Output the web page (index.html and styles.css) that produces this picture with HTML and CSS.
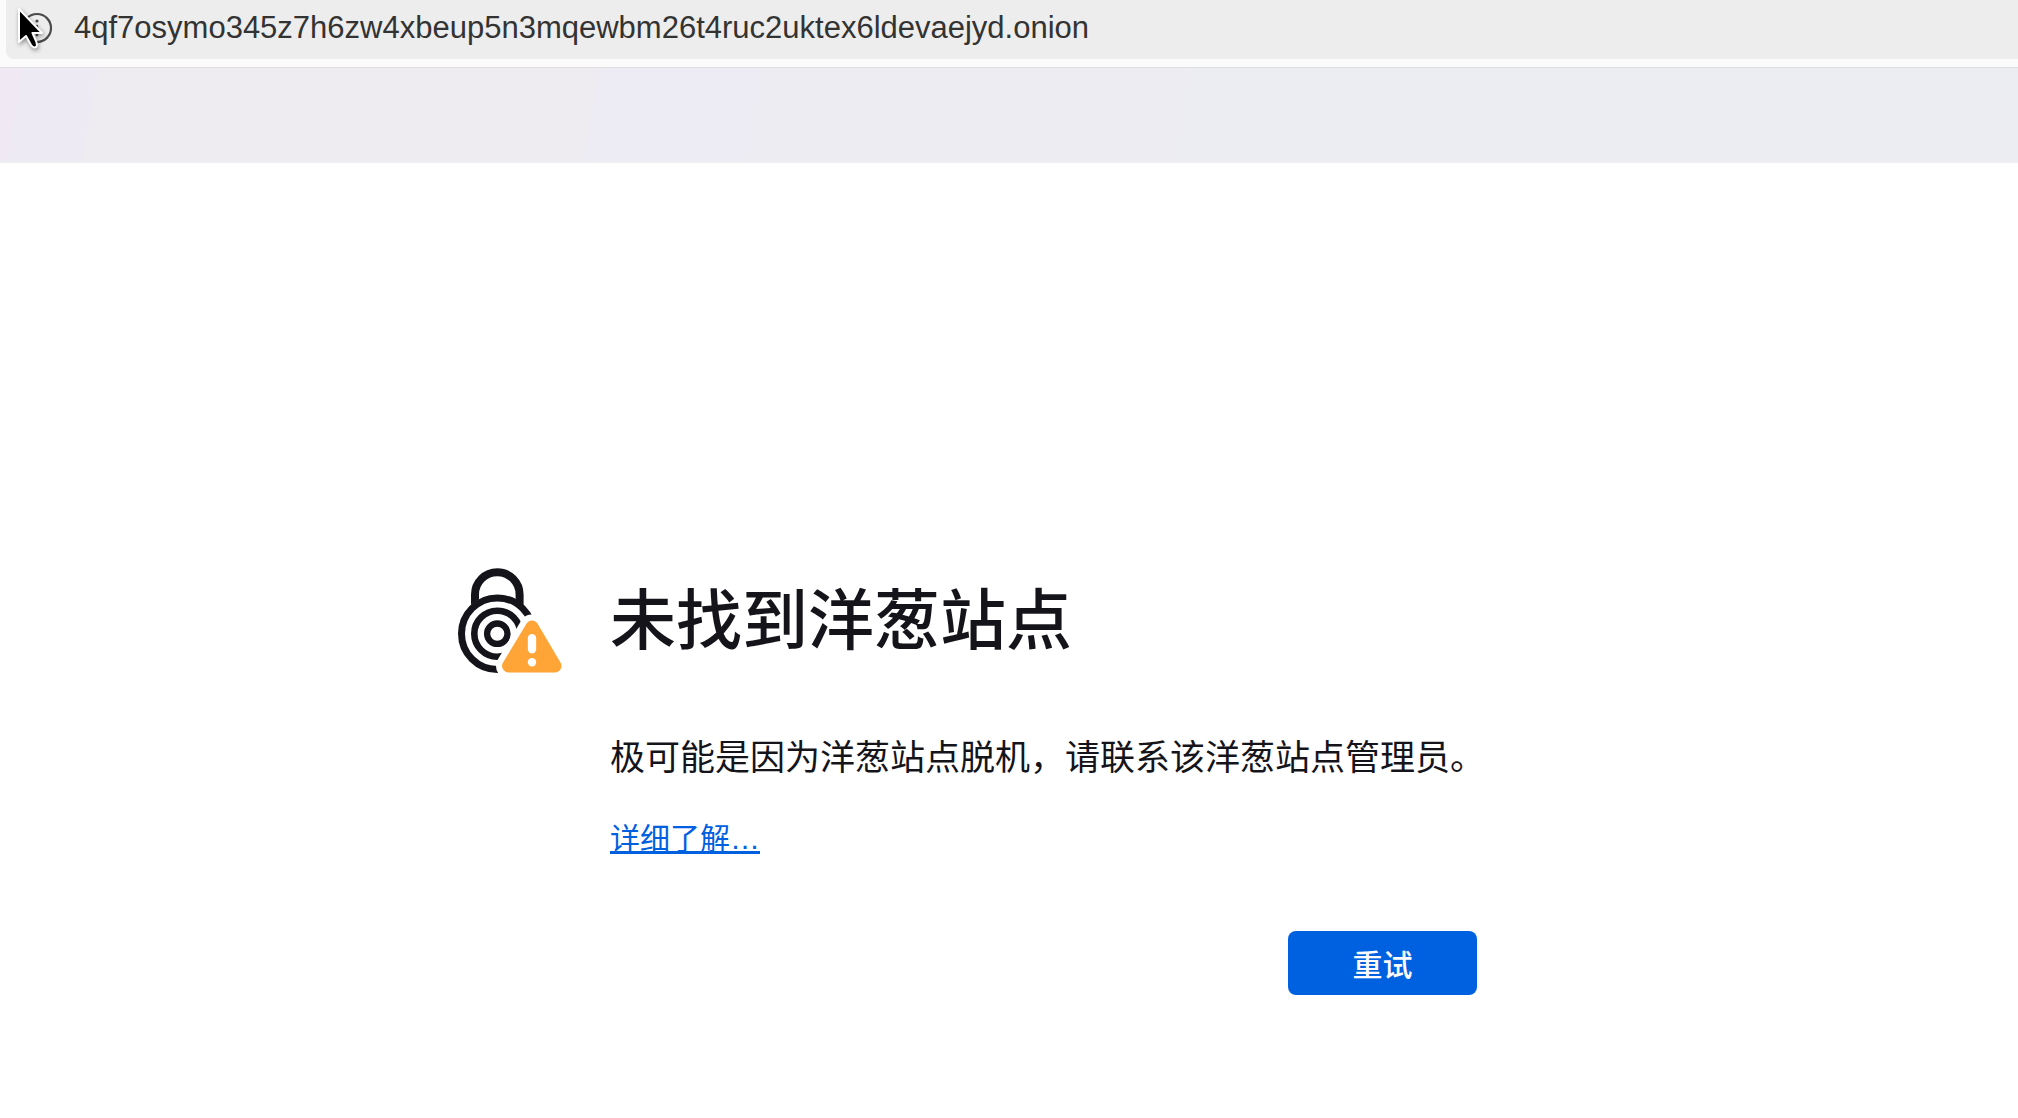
FILE: index.html
```
<!DOCTYPE html>
<html lang="zh-CN">
<head>
    <meta charset="UTF-8">
    <meta name="viewport" content="width=device-width, initial-scale=1.0">
    <title>未找到洋葱站点</title>
    <link rel="stylesheet" href="styles.css">
</head>
<body>
    <header class="toolbar">
        <div class="urlbar">
            <button class="info" type="button" aria-label="站点信息">
                <svg width="32" height="32" viewBox="0 0 32 32">
                    <circle cx="16" cy="16" r="14" fill="none" stroke="#4a4a4a" stroke-width="2.2"/>
                    <path d="M16 14v9" stroke="#4a4a4a" stroke-width="2.4" stroke-linecap="round"/>
                    <circle cx="16" cy="9" r="1.6" fill="#4a4a4a"/>
                </svg>
            </button>
            <input class="url" type="text" aria-label="地址" value="4qf7osymo345z7h6zw4xbeup5n3mqewbm26t4ruc2uktex6ldevaejyd.onion">
        </div>
    </header>
    <div class="band"></div>

    <main class="page">
        <section class="error">
            <svg class="error-icon" width="105" height="105" viewBox="0 0 105 105">
                <g fill="none" stroke="#15141a">
                    <path d="M17 38V26.500a22.300 22.300 0 0 1 44.600 0V38" stroke-width="8"/>
                    <circle cx="39.300" cy="65.700" r="39" fill="#fff" stroke="none"/>
                    <circle cx="39.300" cy="65.700" r="35.800" stroke-width="7"/>
                    <circle cx="39.300" cy="65.700" r="23" stroke-width="6.600"/>
                    <circle cx="39.300" cy="65.700" r="10.200" stroke-width="6.300"/>
                </g>
                <path d="M74 59L97 98H50.500Z" fill="#fff" stroke="#fff" stroke-width="25" stroke-linejoin="round"/>
                <path d="M74 59L97 98H50.500Z" fill="#ffa436" stroke="#ffa436" stroke-width="13" stroke-linejoin="round"/>
                <path d="M74 70.200v11" stroke="#fff" stroke-width="8.300" stroke-linecap="round"/>
                <circle cx="74" cy="94.300" r="4.200" fill="#fff"/>
            </svg>
            <h1>未找到洋葱站点</h1>
            <div class="details">
                <p>极可能是因为洋葱站点脱机，请联系该洋葱站点管理员。</p>
                <a href="#">详细了解…</a>
                <button class="retry" type="button">重试</button>
            </div>
        </section>
    </main>

    <svg class="pointer" width="32" height="48" viewBox="0 0 32 48">
        <path d="M3 3V36L10 30L15 39Q18 43 20.500 40.500Q21.500 39 20 35L16.500 27H26Z" fill="#000" stroke="#fff" stroke-width="2" stroke-linejoin="round"/>
    </svg>
</body>
</html>
```
FILE: styles.css
```
* {
    box-sizing: border-box;
}

body {
    margin: 0;
    font-family: "Liberation Sans", "Noto Sans CJK SC", sans-serif;
    color: #15141a;
    background: #fff;
}

.toolbar {
    height: 68px;
    padding: 0 0 8px 6px;
    background: #fbfbfb;
    border-bottom: 1px solid #dedde2;
}

.urlbar {
    display: flex;
    align-items: center;
    gap: 21px;
    height: 59px;
    padding: 0 0 4px 15px;
    background: #ededed;
    border-bottom-left-radius: 8px;
}

.info {
    display: flex;
    padding: 0;
    border: none;
    background: none;
}

.url {
    flex: 1;
    padding: 0;
    border: none;
    outline: none;
    background: none;
    font-family: inherit;
    font-size: 31px;
    color: #333;
}

.band {
    height: 95px;
    border-bottom: 2px solid #efeef3;
    background: linear-gradient(100deg, #f0e9f4 22px, #edeaf4 23px, #edeaf4 96px, #eeebf1 97px, #eeebf1 590px, #edebf4 592px, #edebf4 744px, #edecf2 750px, #edecf2 1160px, #ebedf2 1190px);
}

.page {
    display: flex;
    justify-content: center;
    padding: 405px 75px 120px 0;
}

.error {
    display: grid;
    grid-template-columns: 105px 875px;
    column-gap: 47px;
    align-items: center;
}

h1 {
    margin: 0;
    font-size: 66px;
    font-weight: 500;
    line-height: 80px;
}

.details {
    grid-column: 2;
    display: flex;
    flex-direction: column;
    align-items: flex-start;
    padding-top: 60px;
}

p {
    margin: 0 0 32px;
    font-size: 35px;
    line-height: 50px;
}

a {
    margin-bottom: 68px;
    font-size: 30px;
    line-height: 48px;
    color: #0060df;
}

.retry {
    align-self: flex-end;
    width: 189px;
    height: 64px;
    margin-right: 8px;
    border: none;
    border-radius: 8px;
    background: #0061e0;
    color: #fbfbfe;
    font-family: inherit;
    font-size: 30px;
    font-weight: 500;
}

.pointer {
    position: absolute;
    top: 6px;
    left: 16px;
    filter: drop-shadow(1px 2px 2px rgba(0, 0, 0, 0.4));
}
```
